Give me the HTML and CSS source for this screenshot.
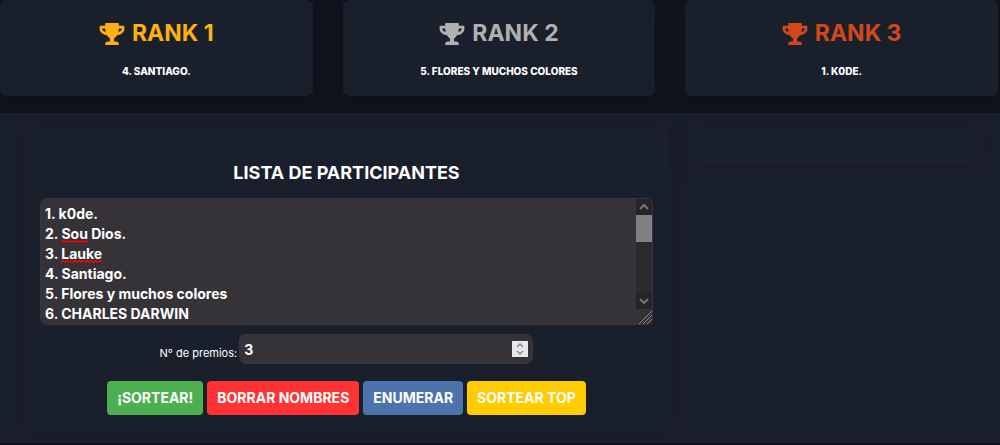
FILE: index.html
```html
<!DOCTYPE html>
<html lang="es">
<head>
<meta charset="utf-8">
<meta name="viewport" content="width=device-width, initial-scale=1">
<title>Sorteo</title>
<link rel="stylesheet" href="styles.css">
</head>
<body>
<svg class="defs" aria-hidden="true">
  <symbol id="trophy" viewBox="0 0 576 512"><path d="M552 64H448V24c0-13.300-10.700-24-24-24H152c-13.300 0-24 10.700-24 24v40H24C10.700 64 0 74.700 0 88v56c0 35.700 22.500 72.400 61.900 100.700 31.500 22.700 69.800 37.100 110 41.700C203.300 338.500 240 360 240 360v72h-48c-35.300 0-64 20.700-64 56v12c0 6.600 5.400 12 12 12h296c6.600 0 12-5.400 12-12v-12c0-35.300-28.700-56-64-56h-48v-72s36.700-21.500 68.100-73.600c40.300-4.600 78.600-19 110-41.700 39.300-28.300 61.900-65 61.900-100.700V88c0-13.300-10.700-24-24-24zM99.300 192.800C74.900 175.200 64 155.600 64 144v-16h64.200c1 32.600 5.800 61.200 12.800 86.200-15.100-5.200-29.200-12.400-41.700-21.400zM512 144c0 16.100-17.700 36.100-35.300 48.800-12.500 9-26.700 16.200-41.800 21.400 7-25 11.800-53.600 12.800-86.200H512v16z"/></symbol>
</svg>
<header class="ranks">
  <section class="rank rank-gold">
    <h2 class="rank-title"><svg class="trophy" aria-hidden="true"><use href="#trophy"/></svg>RANK 1</h2>
    <p class="rank-name">4. SANTIAGO.</p>
  </section>
  <section class="rank rank-silver">
    <h2 class="rank-title"><svg class="trophy" aria-hidden="true"><use href="#trophy"/></svg>RANK 2</h2>
    <p class="rank-name">5. FLORES Y MUCHOS COLORES</p>
  </section>
  <section class="rank rank-bronze">
    <h2 class="rank-title"><svg class="trophy" aria-hidden="true"><use href="#trophy"/></svg>RANK 3</h2>
    <p class="rank-name">1. K0DE.</p>
  </section>
</header>
<main class="main">
  <form class="panel entry">
    <h1 class="entry-title"><label for="names">LISTA DE PARTICIPANTES</label></h1>
    <div class="names-box">
      <textarea class="names" id="names" spellcheck="false">1. k0de.
2. Sou Dios.
3. Lauke
4. Santiago.
5. Flores y muchos colores
6. CHARLES DARWIN</textarea>
      <span class="misspelt misspelt-sou"></span>
      <span class="misspelt misspelt-lauke"></span>
      <div class="scrollbar" aria-hidden="true">
        <svg class="scroll-arrow" viewBox="0 0 16 16"><path d="M4 10l4-4 4 4"/></svg>
        <div class="scroll-track"><div class="scroll-thumb"></div></div>
        <svg class="scroll-arrow" viewBox="0 0 16 16"><path d="M4 6l4 4 4-4"/></svg>
      </div>
    </div>
    <div class="prizes">
      <label for="prizes">N° de premios:</label>
      <input class="prizes-input" id="prizes" type="number" value="3">
    </div>
    <div class="actions">
      <button class="btn btn-green" type="button">¡SORTEAR!</button>
      <button class="btn btn-red" type="button">BORRAR NOMBRES</button>
      <button class="btn btn-blue" type="button">ENUMERAR</button>
      <button class="btn btn-yellow" type="button">SORTEAR TOP</button>
    </div>
  </form>
  <aside class="panel results"></aside>
</main>
</body>
</html>
```
FILE: styles.css
```css
* { box-sizing: border-box; }

body {
  margin: 0;
  background: #10131d;
  color: #fff;
  font-family: Inter, "Open Sans", sans-serif;
}

.defs { display: none; }

.ranks {
  display: grid;
  grid-template-columns: repeat(3, 1fr);
  gap: 30px;
  padding: 0 2px 17px 0;
}

.rank {
  padding: 20px 16px 19px;
  border-radius: 7px;
  background: #1a202b;
  box-shadow: 0 4px 16px rgba(0, 0, 0, 0.15);
  text-align: center;
}

.rank-title {
  display: flex;
  align-items: center;
  justify-content: center;
  gap: 7px;
  margin: 0;
  font-size: 23px;
  font-weight: 700;
  line-height: 27px;
}

.trophy {
  width: 26px;
  height: 22px;
  fill: currentColor;
}

.rank-gold .rank-title { color: #fdb010; }
.rank-silver .rank-title { color: #b0b0b0; }
.rank-bronze .rank-title { color: #d2481a; }

.rank-name {
  margin: 18px 0 0;
  font-size: 10px;
  font-weight: 800;
  line-height: 12px;
}

.main {
  display: grid;
  grid-template-columns: 647fr 297fr;
  align-items: start;
  gap: 16px;
  padding: 17px 17px 11px 23px;
  background: #1a202b;
}

.panel {
  border-radius: 7px;
  box-shadow: 0 0 16px rgba(28, 22, 36, 0.6);
}

.results { padding: 17px; }

.entry {
  padding: 32px 17px 17px;
  text-align: center;
}

.entry-title {
  margin: 0 0 15px;
  font-size: 18px;
  font-weight: 700;
  line-height: 21px;
}

.names-box { position: relative; }

.names {
  display: block;
  width: 100%;
  height: 127px;
  padding: 5px 4px;
  border: 1px solid #38363c;
  border-radius: 7px;
  background: #353338;
  color: #fff;
  font: 700 14px/20px Inter, "Open Sans", sans-serif;
  resize: vertical;
}

.names::-webkit-resizer {
  background: #353338 url("data:image/svg+xml,%3Csvg xmlns='http://www.w3.org/2000/svg' viewBox='0 0 16 16'%3E%3Cpath d='M2 16L16 2M6 16L16 6M10 16l6-6' fill='none' stroke='%2388878a'/%3E%3C/svg%3E") center / 16px 16px no-repeat;
}

.scrollbar {
  position: absolute;
  top: 1px;
  right: 1px;
  bottom: 16px;
  display: flex;
  flex-direction: column;
  width: 16px;
  border-top-right-radius: 6px;
  overflow: hidden;
}

.scroll-arrow {
  width: 16px;
  height: 16px;
  background: #252428;
  fill: none;
  stroke: #777779;
  stroke-width: 2;
}

.scroll-track {
  flex: 1;
  background: #2b2a2e;
}

.scroll-thumb {
  height: 35%;
  background: #808082;
}

/* Spell-check underlines */
.misspelt {
  position: absolute;
  height: 3px;
  background: url("data:image/svg+xml,%3Csvg xmlns='http://www.w3.org/2000/svg' viewBox='0 0 4 3'%3E%3Cpath d='M0 2.500L2 .5l2 2' fill='none' stroke='red' stroke-width='1.300'/%3E%3C/svg%3E") 0 0 / 4px 3px repeat-x;
}

.misspelt-sou { top: 42px; left: 21px; width: 27px; }
.misspelt-lauke { top: 62px; left: 21px; width: 41px; }

.prizes {
  display: flex;
  align-items: center;
  justify-content: center;
  gap: 2px;
  margin-top: 9px;
  font-size: 11px;
  line-height: 14px;
}

.prizes label { padding-top: 7px; }

.prizes-input {
  width: 48%;
  height: 30px;
  padding: 0 4px;
  border: 1px solid #38363c;
  border-radius: 7px;
  background: #353338;
  color: #fff;
  font: 700 14px/20px Inter, "Open Sans", sans-serif;
}

.prizes-input::-webkit-inner-spin-button {
  appearance: none;
  width: 16px;
  height: 16px;
  opacity: 1;
  background: #e9e9ed url("data:image/svg+xml,%3Csvg xmlns='http://www.w3.org/2000/svg' viewBox='0 0 16 16'%3E%3Cpath d='M5 6l3-3 3 3M5 10l3 3 3-3' fill='none' stroke='%23808084' stroke-width='1.300'/%3E%3C/svg%3E") center / 16px 16px no-repeat;
}

.actions {
  display: flex;
  flex-wrap: wrap;
  justify-content: center;
  gap: 4px;
  margin-top: 17px;
}

.btn {
  padding: 7px 10px;
  border: 0;
  border-radius: 4px;
  color: #fff;
  font: 700 14px/20px Inter, "Open Sans", sans-serif;
}

.btn-green { background: #4caf50; }
.btn-red { background: #ff3333; }
.btn-blue { background: #4c73ac; }
.btn-yellow { background: #ffcc00; }
```
